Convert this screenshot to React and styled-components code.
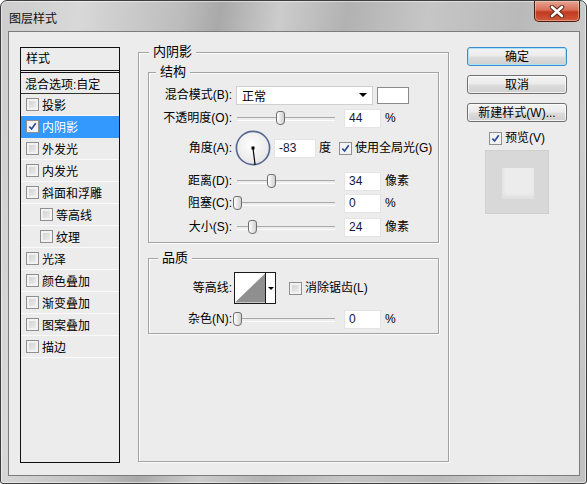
import styled, { createGlobalStyle } from "styled-components";

const GlobalStyle = createGlobalStyle`
  html, body {
    margin: 0;
    padding: 0;
    background: #ffffff;
  }
  body {
    font-family: "Liberation Sans", "Noto Sans CJK SC", sans-serif;
    font-size: 12px;
    color: #000;
  }
  * {
    box-sizing: border-box;
  }
`;

const Window = styled.div`
  width: 587px;
  height: 484px;
  display: flex;
  flex-direction: column;
  border: 1px solid #3d3d3d;
  border-radius: 7px 7px 3px 3px;
  overflow: hidden;
  background: linear-gradient(
    100deg,
    #cdcdcd 0%,
    #d8d8d8 12%,
    #bdbdbd 27%,
    #a9a9a9 33%,
    #cccccc 42%,
    #b2b2b2 52%,
    #c6c6c6 64%,
    #b9b9b9 78%,
    #cfcfcf 90%,
    #c0c0c0 100%
  );
  box-shadow: inset 0 0 0 1px rgba(255, 255, 255, 0.5);
`;

const TitleBar = styled.div`
  height: 30px;
  flex-shrink: 0;
  display: flex;
  justify-content: space-between;
  align-items: flex-start;
  padding-left: 8px;
`;

const Title = styled.span`
  margin-top: 11px;
  line-height: 15px;
  color: #111;
`;

const CloseButton = styled.div`
  width: 46px;
  height: 21px;
  margin-right: 6px;
  border: 1px solid #4e1b12;
  border-top: none;
  border-radius: 0 0 5px 5px;
  display: flex;
  align-items: center;
  justify-content: center;
  background: linear-gradient(#e6a595 0%, #d86e57 45%, #c2391f 55%, #cf5a3c 100%);
  box-shadow: inset 0 0 0 1px rgba(255, 220, 200, 0.45);
`;

const Client = styled.div`
  flex: 1;
  margin: 0 6px 7px 7px;
  border: 1px solid #7c7c7c;
  background: #ececec;
  display: flex;
  align-items: flex-start;
  padding: 15px 0 0 11px;
`;

/* ---------- left list ---------- */

const List = styled.div`
  width: 100px;
  height: 416px;
  flex-shrink: 0;
  border: 1px solid #111;
  margin-right: 18px;
  display: flex;
  flex-direction: column;
`;

const ListHeader = styled.div`
  height: 25px;
  padding: 4px 0 0 5px;
  line-height: 14px;
  border-bottom: 3px double #111;
`;

const BlendRow = styled.div`
  height: 21px;
  padding-left: 4px;
  display: flex;
  align-items: center;
  border-bottom: 1px solid #333;
`;

const ListItem = styled.div`
  height: 22px;
  display: flex;
  align-items: center;
  gap: 3px;
  padding-left: ${(p) => (p.$indent ? 19 : 5)}px;
  border-bottom: 1px solid ${(p) => (p.$selected ? "#3399ff" : "#fafafa")};
  background: ${(p) => (p.$selected ? "#3399ff" : "transparent")};
  color: ${(p) => (p.$selected ? "#fff" : "#000")};
`;

/* ---------- checkbox ---------- */

const Box = styled.span`
  width: 13px;
  height: 13px;
  flex-shrink: 0;
  display: inline-flex;
  align-items: center;
  justify-content: center;
  border: 1px solid #8e8f8f;
  background: ${(p) =>
    p.$checked ? "#f6f6f6" : "linear-gradient(135deg, #cbcbcb, #f4f4f4)"};
  box-shadow: inset 0 0 0 2px #f2f2f2;
`;

function CheckBox({ checked }) {
  return (
    <Box $checked={checked}>
      {checked && (
        <svg width="9" height="9" viewBox="0 0 10 10">
          <path d="M1.5 5.2 L4 7.8 L8.6 1.4" fill="none" stroke="#2f4a98" strokeWidth="1.9" />
        </svg>
      )}
    </Box>
  );
}

/* ---------- groups ---------- */

const OuterGroup = styled.div`
  position: relative;
  width: 311px;
  height: 410px;
  flex-shrink: 0;
  margin-top: 5px;
  margin-right: 18px;
  padding: 19px 9px 0 9px;
  border: 1px solid #a3a3a3;
  box-shadow: inset 1px 1px 0 #fbfbfb, 1px 1px 0 #fbfbfb;
`;

const Group = styled.div`
  position: relative;
  height: ${(p) => p.$h}px;
  margin-top: ${(p) => p.$mt || 0}px;
  border: 1px solid #a3a3a3;
  box-shadow: inset 1px 1px 0 #fbfbfb, 1px 1px 0 #fbfbfb;
  display: flex;
  flex-direction: column;
`;

const Legend = styled.span`
  position: absolute;
  top: -9px;
  left: ${(p) => p.$left}px;
  padding: 0 4px;
  line-height: 16px;
  background: #ececec;
  font-size: 13px;
`;

const Row = styled.div`
  height: ${(p) => p.$h}px;
  margin-top: ${(p) => p.$mt}px;
  display: flex;
  align-items: center;
  flex-shrink: 0;
`;

const Label = styled.span`
  width: 83px;
  flex-shrink: 0;
  margin-right: 2px;
  text-align: right;
  white-space: nowrap;
  line-height: 14px;
`;

const Text = styled.span`
  margin-left: ${(p) => p.$ml || 0}px;
  white-space: nowrap;
  line-height: 14px;
`;

const Field = styled.div`
  width: ${(p) => p.$w}px;
  height: 19px;
  margin-left: ${(p) => p.$ml || 0}px;
  flex-shrink: 0;
  padding-left: 4px;
  background: #fff;
  border: 1px solid #e4e4e4;
  line-height: 17px;
  color: #10183a;
`;

const Select = styled.div`
  width: 137px;
  height: 19px;
  margin-left: 2px;
  flex-shrink: 0;
  display: flex;
  align-items: center;
  justify-content: space-between;
  padding: 0 5px 0 5px;
  background: #fff;
  border: 1px solid #d0d0d0;
`;

const Caret = styled.span`
  width: 0;
  height: 0;
  border-left: 4px solid transparent;
  border-right: 4px solid transparent;
  border-top: 4px solid #000;
`;

const Swatch = styled.div`
  width: 32px;
  height: 17px;
  margin-left: 4px;
  background: #fff;
  border: 1px solid #8a8a8a;
`;

const Slider = styled.div`
  position: relative;
  width: 104px;
  height: 22px;
  flex-shrink: 0;

  &::before {
    content: "";
    position: absolute;
    left: 3px;
    right: 3px;
    top: 10px;
    height: 2px;
    border-top: 1px solid #a8a8a8;
    border-bottom: 1px solid #fdfdfd;
  }
`;

const Thumb = styled.span`
  position: absolute;
  top: 4px;
  width: 9px;
  height: 14px;
  margin-left: -4px;
  border: 1px solid #6f6f6f;
  border-radius: 3px 3px 4px 4px;
  background: linear-gradient(to right, #ffffff, #cfcfcf);
`;

function Range({ value }) {
  return (
    <Slider>
      <Thumb style={{ left: 3 + value * 98 }} />
    </Slider>
  );
}

function Dial({ angle }) {
  const r = (angle * Math.PI) / 180;
  const x = 18 + Math.cos(r) * 17;
  const y = 18 - Math.sin(r) * 17;
  return (
    <svg width="36" height="36" viewBox="0 0 36 36" style={{ marginLeft: 1, flexShrink: 0 }}>
      <defs>
        <radialGradient id="dialFill" cx="0.45" cy="0.4" r="0.6">
          <stop offset="0" stopColor="#ffffff" />
          <stop offset="1" stopColor="#e6e6e6" />
        </radialGradient>
      </defs>
      <circle cx="18" cy="18" r="16.6" fill="url(#dialFill)" stroke="#586a93" strokeWidth="1.7" />
      <line x1="18" y1="18" x2={x} y2={y} stroke="#000" strokeWidth="1.2" />
      <rect x="16.5" y="16.5" width="3" height="3" fill="#000" />
    </svg>
  );
}

const ContourBox = styled.div`
  width: 42px;
  height: 32px;
  margin-left: 0px;
  flex-shrink: 0;
  display: flex;
  border: 1px solid #1a1a1a;
  background: #fff;
`;

const ContourArrow = styled.div`
  width: 10px;
  display: flex;
  align-items: center;
  justify-content: center;
  border-left: 1px solid #1a1a1a;
`;

const SmallCaret = styled(Caret)`
  border-left-width: 3px;
  border-right-width: 3px;
  border-top-width: 3px;
`;

const CheckLabel = styled.label`
  display: flex;
  align-items: center;
  gap: 3px;
  margin-left: ${(p) => p.$ml || 0}px;
  white-space: nowrap;
  line-height: 14px;
`;

/* ---------- right column ---------- */

const Side = styled.div`
  width: 100px;
  flex-shrink: 0;
  display: flex;
  flex-direction: column;
  align-items: center;
`;

const Button = styled.div`
  width: 100px;
  height: 19px;
  margin-bottom: 9px;
  display: flex;
  align-items: center;
  justify-content: center;
  border: 1px solid ${(p) => (p.$default ? "#3a8ccc" : "#707070")};
  border-radius: 3px;
  background: linear-gradient(#f3f3f3 0%, #ebebeb 48%, #dddddd 52%, #cfcfcf 100%);
  box-shadow: inset 0 0 0 1px ${(p) => (p.$default ? "#a9e3f8" : "rgba(255,255,255,0.7)")};
  line-height: 14px;
`;

const Preview = styled.div`
  width: 64px;
  height: 64px;
  margin-top: 5px;
  display: flex;
  align-items: center;
  justify-content: center;
  background: #d8d8d8;
  border: 1px solid #d0d0d0;
`;

const PreviewInner = styled.div`
  width: 32px;
  height: 31px;
  margin: 2px 0 0 2px;
  background: #ececec;
  box-shadow: inset 1px -3px 4px rgba(0, 0, 0, 0.06);
`;

const items = [
  { label: "投影" },
  { label: "内阴影", checked: true, selected: true },
  { label: "外发光" },
  { label: "内发光" },
  { label: "斜面和浮雕" },
  { label: "等高线", indent: true },
  { label: "纹理", indent: true },
  { label: "光泽" },
  { label: "颜色叠加" },
  { label: "渐变叠加" },
  { label: "图案叠加" },
  { label: "描边" },
];

export default function App() {
  return (
    <>
      <GlobalStyle />
      <Window>
        <TitleBar>
          <Title>图层样式</Title>
          <CloseButton>
            <svg width="16" height="13" viewBox="0 0 16 13">
              <path
                d="M3 2 L13 11 M13 2 L3 11"
                stroke="#5a2418"
                strokeWidth="4.4"
                strokeLinecap="round"
              />
              <path
                d="M3 2 L13 11 M13 2 L3 11"
                stroke="#ffffff"
                strokeWidth="2.6"
                strokeLinecap="round"
              />
            </svg>
          </CloseButton>
        </TitleBar>
        <Client>
          <List>
            <ListHeader>样式</ListHeader>
            <BlendRow>混合选项:自定</BlendRow>
            {items.map((it) => (
              <ListItem key={it.label} $indent={it.indent} $selected={it.selected}>
                <CheckBox checked={it.checked} />
                {it.label}
              </ListItem>
            ))}
          </List>

          <OuterGroup>
            <Legend $left={10}>内阴影</Legend>
            <Group $h={171}>
              <Legend $left={7}>结构</Legend>
              <Row $h={22} $mt={11}>
                <Label>混合模式(B):</Label>
                <Select>
                  正常
                  <Caret />
                </Select>
                <Swatch />
              </Row>
              <Row $h={22} $mt={1}>
                <Label>不透明度(O):</Label>
                <Range value={0.44} />
                <Field $w={37} $ml={6}>44</Field>
                <Text $ml={4}>%</Text>
              </Row>
              <Row $h={36} $mt={1}>
                <Label>角度(A):</Label>
                <Dial angle={-83} />
                <Field $w={42} $ml={3}>-83</Field>
                <Text $ml={3}>度</Text>
                <CheckLabel $ml={8}>
                  <CheckBox checked />
                  使用全局光(G)
                </CheckLabel>
              </Row>
              <Row $h={22} $mt={4}>
                <Label>距离(D):</Label>
                <Range value={0.35} />
                <Field $w={37} $ml={6}>34</Field>
                <Text $ml={4}>像素</Text>
              </Row>
              <Row $h={22} $mt={0}>
                <Label>阻塞(C):</Label>
                <Range value={0} />
                <Field $w={37} $ml={6}>0</Field>
                <Text $ml={4}>%</Text>
              </Row>
              <Row $h={22} $mt={2}>
                <Label>大小(S):</Label>
                <Range value={0.155} />
                <Field $w={37} $ml={6}>24</Field>
                <Text $ml={4}>像素</Text>
              </Row>
            </Group>

            <Group $h={76} $mt={15}>
              <Legend $left={9}>品质</Legend>
              <Row $h={32} $mt={13}>
                <Label>等高线:</Label>
                <ContourBox>
                  <svg width="31" height="30" viewBox="0 0 31 30">
                    <polygon points="0,30 31,0 31,30" fill="#8f8f8f" />
                  </svg>
                  <ContourArrow>
                    <SmallCaret />
                  </ContourArrow>
                </ContourBox>
                <CheckLabel $ml={13}>
                  <CheckBox />
                  消除锯齿(L)
                </CheckLabel>
              </Row>
              <Row $h={22} $mt={4}>
                <Label>杂色(N):</Label>
                <Range value={0} />
                <Field $w={37} $ml={6}>0</Field>
                <Text $ml={4}>%</Text>
              </Row>
            </Group>
          </OuterGroup>

          <Side>
            <Button $default>确定</Button>
            <Button>取消</Button>
            <Button>新建样式(W)...</Button>
            <CheckLabel>
              <CheckBox checked />
              预览(V)
            </CheckLabel>
            <Preview>
              <PreviewInner />
            </Preview>
          </Side>
        </Client>
      </Window>
    </>
  );
}
